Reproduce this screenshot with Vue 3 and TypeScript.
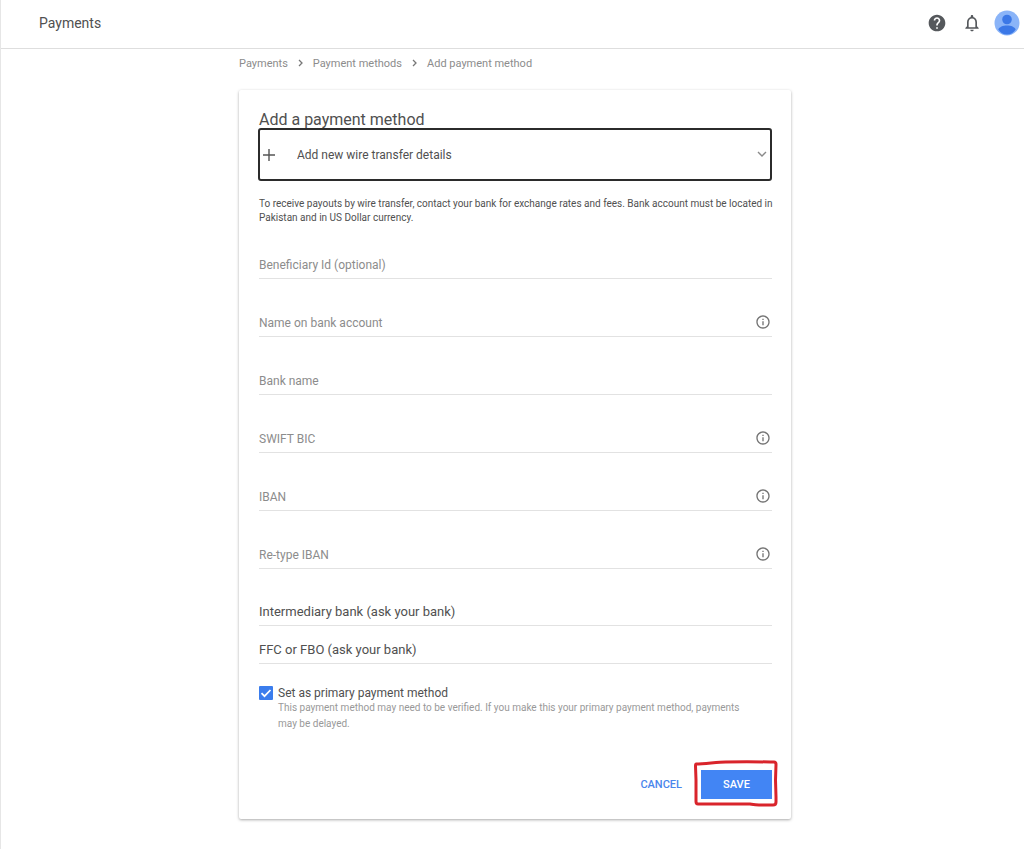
<script setup lang="ts">
import { ref } from 'vue'

interface Field {
  id: string
  label: string
  info: boolean
}

const crumbs: string[] = ['Payments', 'Payment methods', 'Add payment method']

const fields: Field[] = [
  { id: 'beneficiary', label: 'Beneficiary Id (optional)', info: false },
  { id: 'holder', label: 'Name on bank account', info: true },
  { id: 'bank', label: 'Bank name', info: false },
  { id: 'swift', label: 'SWIFT BIC', info: true },
  { id: 'iban', label: 'IBAN', info: true },
  { id: 'iban-repeat', label: 'Re-type IBAN', info: true },
]

const sections: string[] = ['Intermediary bank (ask your bank)', 'FFC or FBO (ask your bank)']

const values = ref<Record<string, string>>({})
const method = ref('wire')
const primary = ref(true)
</script>

<template>
  <div class="page">
    <header class="topbar">
      <h1 class="brand">Payments</h1>
      <div class="actions">
        <button type="button" class="icon-btn" aria-label="Help">
          <svg width="20" height="20" viewBox="0 0 24 24" fill="#55585c">
            <path d="M12 2C6.48 2 2 6.48 2 12s4.48 10 10 10 10-4.48 10-10S17.52 2 12 2zm1 17h-2v-2h2v2zm2.07-7.75l-.9.92C13.45 12.9 13 13.5 13 15h-2v-.5c0-1.1.45-2.1 1.17-2.83l1.24-1.26c.37-.36.59-.86.59-1.41 0-1.1-.9-2-2-2s-2 .9-2 2H8c0-2.21 1.79-4 4-4s4 1.79 4 4c0 .88-.36 1.68-.93 2.25z" />
          </svg>
        </button>
        <button type="button" class="icon-btn" aria-label="Notifications">
          <svg width="20" height="20" viewBox="0 0 24 24" fill="#55585c">
            <path d="M12 22c1.1 0 2-.9 2-2h-4c0 1.1.9 2 2 2zm6-6v-5c0-3.07-1.63-5.64-4.5-6.32V4c0-.83-.67-1.5-1.5-1.5s-1.5.67-1.5 1.5v.68C7.64 5.36 6 7.92 6 11v5l-2 2v1h16v-1l-2-2zm-2 1H8v-6c0-2.48 1.51-4.5 4-4.5s4 2.02 4 4.5v6z" />
          </svg>
        </button>
        <button type="button" class="icon-btn" aria-label="Account">
          <svg width="26" height="26" viewBox="0 0 26 26">
            <circle cx="13" cy="13" r="12.5" fill="#8ab4f8" />
            <circle cx="13" cy="9.5" r="4.8" fill="#3b78e7" />
            <path d="M4.3 19.5c1-2.5 4.5-4 8.7-4s7.7 1.5 8.7 4c-1.8 3-5 5-8.7 5s-6.9-2-8.7-5z" fill="#3b78e7" />
          </svg>
        </button>
      </div>
    </header>

    <main class="content">
      <div class="column">
        <nav class="crumbs" aria-label="Breadcrumb">
          <template v-for="(crumb, i) in crumbs" :key="crumb">
            <svg v-if="i > 0" class="sep" width="5" height="8" viewBox="0 0 5 8" fill="none" stroke="#777" stroke-width="1.3">
              <path d="M1 1l3 3-3 3" />
            </svg>
            <a href="#">{{ crumb }}</a>
          </template>
        </nav>

        <form class="card" @submit.prevent>
          <h2 class="title">Add a payment method</h2>

          <div class="picker">
            <svg class="plus" width="12" height="12" viewBox="0 0 12 12" stroke="#555" stroke-width="1.4">
              <path d="M6 0v12M0 6h12" />
            </svg>
            <select v-model="method" aria-label="Payment method">
              <option value="wire">Add new wire transfer details</option>
            </select>
            <svg class="chevron" width="10" height="7" viewBox="0 0 10 7" fill="none" stroke="#8a8a8a" stroke-width="1.4">
              <path d="M1 1l4 4 4-4" />
            </svg>
          </div>

          <p class="note">
            To receive payouts by wire transfer, contact your bank for exchange rates and fees. Bank account must be located in
            Pakistan and in US Dollar currency.
          </p>

          <div class="fields">
            <div v-for="f in fields" :key="f.id" class="field">
              <input :id="f.id" v-model="values[f.id]" type="text" :placeholder="f.label" :aria-label="f.label" />
              <button v-if="f.info" type="button" class="icon-btn" :aria-label="'About ' + f.label">
                <svg width="16" height="16" viewBox="0 0 24 24" fill="#737373">
                  <path d="M11 7h2v2h-2zm0 4h2v6h-2zm1-9C6.48 2 2 6.48 2 12s4.48 10 10 10 10-4.48 10-10S17.52 2 12 2zm0 18c-4.41 0-8-3.59-8-8s3.59-8 8-8 8 3.59 8 8-3.59 8-8 8z" />
                </svg>
              </button>
            </div>
          </div>

          <button v-for="s in sections" :key="s" type="button" class="section">{{ s }}</button>

          <div class="primary">
            <input id="primary" v-model="primary" type="checkbox" aria-describedby="primary-hint" />
            <svg class="tick" width="14" height="14" viewBox="0 0 14 14" fill="none" stroke="#fff" stroke-width="1.7">
              <path v-if="primary" d="M2.5 7.2l3 3 6-6.2" />
            </svg>
            <div>
              <label for="primary">Set as primary payment method</label>
              <p id="primary-hint" class="hint">
                This payment method may need to be verified. If you make this your primary payment method, payments may be delayed.
              </p>
            </div>
          </div>

          <div class="buttons">
            <button type="button" class="cancel">CANCEL</button>
            <div class="save-wrap">
              <button type="submit" class="save">SAVE</button>
              <svg class="marker" width="86" height="48" viewBox="0 0 86 48" fill="none" stroke="#d9242b" stroke-width="3" stroke-linejoin="round" stroke-linecap="round">
                <path d="M3 4C10 4 17 3 27 2.2C45 1.5 64 1.800 81 2c1.500 0 2 1 2 2.500L82.500 20l.5 17v5c0 2-1 3-3 3H66c-4 0-6-.5-9-1H5c-1.500 0-2-1-2-2.500V20L2.500 6c0-1 0-2 .5-2z" />
              </svg>
            </div>
          </div>
        </form>
      </div>
    </main>
  </div>
</template>

<style>
body {
  margin: 0;
  background: #fff;
}
</style>

<style scoped>
.page {
  box-sizing: border-box;
  min-height: 100vh;
  border-left: 1px solid #e6e6e6;
  background: #fff;
  color: #505050;
  font-family: Roboto, "Liberation Sans", sans-serif;
}

button,
input,
select {
  margin: 0;
  padding: 0;
  border: 0;
  background: none;
  color: inherit;
  font-family: inherit;
}

button {
  cursor: pointer;
}

.topbar {
  display: flex;
  align-items: center;
  justify-content: space-between;
  height: 46px;
  padding: 0 4px 2px 38px;
  border-bottom: 1px solid #dedede;
}

.brand {
  margin: 0;
  font-size: 14px;
  font-weight: 400;
}

.actions {
  display: flex;
  align-items: center;
  gap: 12px;
}

.actions .icon-btn:first-child {
  margin-right: 3px;
}

.icon-btn {
  display: flex;
}

.content {
  padding-left: 5px;
}

.column {
  max-width: 552px;
  margin: 0 auto;
}

.crumbs {
  display: flex;
  align-items: center;
  height: 28px;
  margin-bottom: 13px;
  font-size: 11px;
}

.crumbs a {
  color: #8c8c8c;
  text-decoration: none;
}

.sep {
  margin: 0 10px;
}

.card {
  padding: 22px 19px 20px 20px;
  border-radius: 2px;
  box-shadow: 0 1px 3px rgba(0, 0, 0, 0.34);
}

.title {
  margin: 0;
  font-size: 16px;
  font-weight: 400;
  line-height: 16px;
}

.picker {
  display: grid;
  align-items: center;
  height: 53px;
  margin-left: -1px;
}

.picker > * {
  grid-area: 1 / 1;
}

.picker select {
  box-sizing: border-box;
  width: 100%;
  height: 100%;
  padding: 0 36px 0 37px;
  border: 2px solid #2b2b2b;
  border-radius: 3px;
  font-size: 12px;
  appearance: none;
}

.plus {
  margin-left: 5px;
  pointer-events: none;
}

.chevron {
  justify-self: end;
  margin-right: 5px;
  pointer-events: none;
}

.note {
  margin: 16px -4px 0 0;
  font-size: 10px;
  line-height: 14px;
}

.field {
  display: flex;
  align-items: flex-end;
  height: 57px;
  border-bottom: 1px solid #e2e2e2;
}

.field:first-child {
  height: 53px;
}

.field input {
  flex: 1;
  min-width: 0;
  height: 26px;
  font-size: 12px;
}

.field input::placeholder {
  color: #8c8c8c;
  opacity: 1;
}

.field .icon-btn {
  padding: 0 1px 6px;
}

.section {
  display: block;
  width: 100%;
  height: 38px;
  padding-top: 10px;
  border-bottom: 1px solid #e2e2e2;
  font-size: 13px;
  text-align: left;
}

.fields + .section {
  margin-top: 19px;
}

.primary {
  display: grid;
  grid-template-columns: 14px 1fr;
  column-gap: 5px;
  margin-top: 22px;
}

.primary > input,
.tick {
  grid-area: 1 / 1;
  width: 14px;
  height: 14px;
}

.primary > input {
  border-radius: 1px;
  appearance: none;
  box-shadow: inset 0 0 0 2px #757575;
}

.primary > input:checked {
  background: #3b7ded;
  box-shadow: none;
}

.tick {
  pointer-events: none;
}

.primary label {
  display: block;
  font-size: 12px;
  line-height: 14px;
}

.hint {
  margin: 0;
  padding-right: 12px;
  color: #999;
  font-size: 10px;
  line-height: 16px;
}

.buttons {
  display: flex;
  align-items: center;
  justify-content: flex-end;
  gap: 19px;
  margin-top: 38px;
}

.cancel,
.save {
  font-size: 11px;
  font-weight: 500;
}

.cancel {
  color: #4a86ec;
}

.save-wrap {
  position: relative;
}

.save {
  display: block;
  width: 71px;
  height: 29px;
  background: #4285f4;
  color: #fff;
}

.marker {
  position: absolute;
  top: -10px;
  left: -8px;
  pointer-events: none;
}
</style>
